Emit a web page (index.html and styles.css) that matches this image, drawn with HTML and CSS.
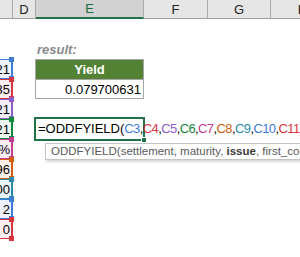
FILE: index.html
```html
<!DOCTYPE html>
<html>

<head>
    <meta charset="UTF-8" />
    <meta name="viewport" content="width=device-width, initial-scale=1.0" />
    <title>ODDFYIELD</title>
    <link rel="stylesheet" href="styles.css">
</head>

<body>
    <div class="sheet">
        <div class="colheads">
            <div class="colhead col-c">C</div>
            <div class="colhead col-d">D</div>
            <div class="colhead col-e active">E</div>
            <div class="colhead col-f">F</div>
            <div class="colhead col-g">G</div>
            <div class="colhead col-h">H</div>
        </div>
        <div class="cells">
            <div class="ref blue row-3"><span class="ref-text">1/4/2021</span></div>
            <div class="ref red row-4"><span class="ref-text">3/1/2035</span></div>
            <div class="ref purple row-5"><span class="ref-text">11/1/2021</span></div>
            <div class="ref green row-6"><span class="ref-text">3/1/2021</span></div>
            <div class="ref magenta row-7"><span class="ref-text">7.85%</span></div>
            <div class="ref orange row-8"><span class="ref-text">98.96</span></div>
            <div class="ref teal row-9"><span class="ref-text">100</span></div>
            <div class="ref blue row-10"><span class="ref-text">2</span></div>
            <div class="ref red row-11"><span class="ref-text">0</span></div>

            <div class="label row-2">result:</div>
            <div class="yield-head row-3">Yield</div>
            <div class="yield-value row-4">0.079700631</div>
            <div class="editing row-6">=ODDFYIELD(<span class="args"><span class="f-blue">C3</span>,<span class="f-red">C4</span>,<span class="f-purple">C5</span>,<span class="f-green">C6</span>,<span class="f-magenta">C7</span>,<span class="f-orange">C8</span>,<span class="f-teal">C9</span>,<span class="f-blue">C10</span>,<span class="f-red">C11</span>)</span><span class="fill-handle"></span>
                <div class="tooltip">ODDFYIELD(settlement, maturity, <b>issue</b>, first_coupon, rate, pr, redemption, frequency, [basis])</div>
            </div>
        </div>
    </div>
</body>

</html>
```

FILE: styles.css
```css
* {
    box-sizing: border-box;
    margin: 0;
    padding: 0;
}

body {
    width: 300px;
    height: 257px;
    overflow: hidden;
    background: #FFFFFF;
    font-family: "Liberation Sans", Arial, sans-serif;
    font-size: 13px;
    color: #000;
}

.sheet {
    width: 300px;
}

/* column headers */
.colheads {
    display: flex;
    height: 19px;
    background: #e6e6e6;
    border-bottom: 1px solid #9e9e9e;
}

.colhead {
    flex: none;
    display: flex;
    align-items: center;
    justify-content: center;
    border-right: 1px solid #ababab;
    color: #222;
    font-size: 13px;
}

.col-c {
    width: 13px;
    color: transparent;
}

.col-d {
    width: 23px;
}

.col-e {
    width: 108px;
}

.col-f {
    width: 64px;
}

.col-g {
    width: 63px;
}

.col-h {
    width: 64px;
}

.colhead.active {
    background: #d2d2d2;
    color: #1e6a3e;
    border-bottom: 2px solid #217346;
    margin-bottom: -1px;
}

/* grid body */
.cells {
    display: grid;
    grid-template-columns: 13px 23px 108px 64px 63px 64px;
    grid-template-rows: repeat(12, 20px);
}

.row-2 { grid-row: 2; }
.row-3 { grid-row: 3; }
.row-4 { grid-row: 4; }
.row-5 { grid-row: 5; }
.row-6 { grid-row: 6; }
.row-7 { grid-row: 7; }
.row-8 { grid-row: 8; }
.row-9 { grid-row: 9; }
.row-10 { grid-row: 10; }
.row-11 { grid-row: 11; }

/* referenced cells in column C */
.ref {
    grid-column: 1;
    position: relative;
    border-top: 1px solid var(--c);
    border-bottom: 1px solid var(--c);
    border-right: 2px solid var(--c);
    background: var(--bg);
}

.ref-text {
    display: flex;
    justify-content: flex-end;
    align-items: center;
    height: 100%;
    overflow: hidden;
    white-space: nowrap;
    padding-right: 1px;
}

.ref::before,
.ref::after {
    content: '';
    position: absolute;
    right: -3px;
    width: 5px;
    height: 5px;
    background: var(--c);
}

.ref::before {
    top: -3px;
}

.ref::after {
    bottom: -3px;
}

.blue { --c: #3d7bd6; --bg: #eef3fb; }
.red { --c: #d6353f; --bg: #fbeef0; }
.purple { --c: #8c5cc9; --bg: #f3eefa; }
.green { --c: #0e8a3a; --bg: #ecf6ef; }
.magenta { --c: #c23b8d; --bg: #f9eef5; }
.orange { --c: #d25d10; --bg: #fbf0e8; }
.teal { --c: #2a8aa8; --bg: #ebf4f7; }

/* column E */
.label {
    grid-column: 3;
    display: flex;
    align-items: center;
    padding-left: 1px;
    font-weight: bold;
    font-style: italic;
    color: #8a8a8a;
}

.yield-head,
.yield-value {
    grid-column: 3;
    margin-left: -1px;
    display: flex;
    align-items: center;
    border: 1px solid #a6a6a6;
}

.yield-head {
    justify-content: center;
    background: #548235;
    color: #FFFFFF;
    font-weight: bold;
    border-bottom: none;
}

.yield-value {
    justify-content: flex-end;
    padding-right: 2px;
}

.editing {
    grid-column: 3;
    position: relative;
    margin: -2px -1px -2px -2px;
    border: 2px solid #217346;
    padding-left: 2px;
    line-height: 20px;
    white-space: nowrap;
    z-index: 1;
}

.args {
    letter-spacing: -0.6px;
}

.f-blue { color: #3d7bd6; }
.f-red { color: #d6353f; }
.f-purple { color: #8c5cc9; }
.f-green { color: #0e8a3a; }
.f-magenta { color: #c23b8d; }
.f-orange { color: #d25d10; }
.f-teal { color: #2a8aa8; }

.fill-handle {
    position: absolute;
    right: -4px;
    bottom: -4px;
    width: 6px;
    height: 6px;
    background: #217346;
    border: 1px solid #FFFFFF;
}

.tooltip {
    position: absolute;
    left: 9px;
    top: 24px;
    height: 17px;
    padding: 0 5px;
    background: #FFFFFF;
    border: 1px solid #c4c4c4;
    box-shadow: 1px 2px 2px rgba(0, 0, 0, 0.15);
    font-size: 11.5px;
    line-height: 15px;
    color: #5a5a5a;
    white-space: nowrap;
}

.tooltip b {
    color: #3a3a3a;
}
```
